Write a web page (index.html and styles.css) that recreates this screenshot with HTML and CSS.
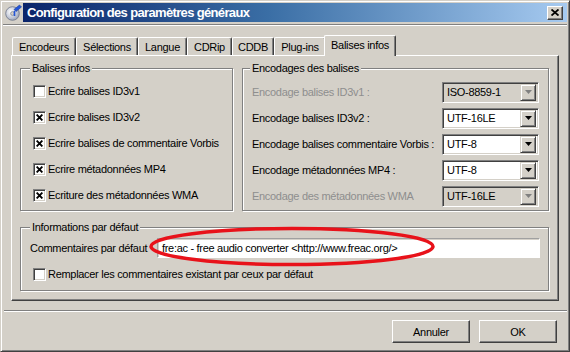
FILE: index.html
```html
<!DOCTYPE html>
<html lang="fr">
<head>
<meta charset="utf-8">
<title>Configuration des paramètres généraux</title>
<link rel="stylesheet" href="styles.css">
</head>
<body>
<div class="window">
  <div class="titlebar">
    <div class="appicon">
      <svg width="17" height="17" viewBox="0 0 17 17">
        <defs>
          <radialGradient id="cd" cx="0.38" cy="0.38" r="0.75">
            <stop offset="0" stop-color="#ffffff"/>
            <stop offset="0.55" stop-color="#c4cad8"/>
            <stop offset="1" stop-color="#8a92aa"/>
          </radialGradient>
        </defs>
        <circle cx="7.5" cy="9.5" r="6.8" fill="url(#cd)" stroke="#6c7488" stroke-width="0.8"/>
        <circle cx="7.5" cy="9.5" r="1.9" fill="#d4d0c8" stroke="#6c7488" stroke-width="0.6"/>
        <path d="M9 5.5 L14.5 1 L16.5 3 L11 7.5 Z" fill="#2456d8" stroke="#1a3c9c" stroke-width="0.6"/>
        <path d="M9.5 7 L9.5 12" stroke="#2456d8" stroke-width="1.6"/>
      </svg>
    </div>
    <div class="caption">
      <span class="caption-text">Configuration des paramètres généraux</span>
      <button class="close" type="button" aria-label="Fermer">
        <svg width="8" height="7" viewBox="0 0 8 7"><path d="M0.5 0.5 L7.5 6.5 M7.5 0.5 L0.5 6.5" stroke="#000" stroke-width="1.8"/></svg>
      </button>
    </div>
  </div>
  <div class="menusep"></div>

  <div class="client">
    <div class="tabs">
      <div class="tab tab-enc">Encodeurs</div>
      <div class="tab tab-sel">Sélections</div>
      <div class="tab tab-lang">Langue</div>
      <div class="tab tab-rip">CDRip</div>
      <div class="tab tab-cddb">CDDB</div>
      <div class="tab tab-plug">Plug-ins</div>
      <div class="tab tab-tags active">Balises infos</div>
    </div>
    <div class="panel">
      <div class="grid">
        <div class="group">
          <div class="legend legend-left">Balises infos</div>
          <div class="rows rows-left">
            <div class="check"><span class="box"></span>Ecrire balises ID3v1</div>
            <div class="check"><span class="box"><svg class="tick" width="7" height="7" viewBox="0 0 7 7"><path d="M0.6 0.6 L6.4 6.4 M6.4 0.6 L0.6 6.4" stroke="#000" stroke-width="1.9"/></svg></span>Ecrire balises ID3v2</div>
            <div class="check"><span class="box"><svg class="tick" width="7" height="7" viewBox="0 0 7 7"><path d="M0.6 0.6 L6.4 6.4 M6.4 0.6 L0.6 6.4" stroke="#000" stroke-width="1.9"/></svg></span>Ecrire balises de commentaire Vorbis</div>
            <div class="check"><span class="box"><svg class="tick" width="7" height="7" viewBox="0 0 7 7"><path d="M0.6 0.6 L6.4 6.4 M6.4 0.6 L0.6 6.4" stroke="#000" stroke-width="1.9"/></svg></span>Ecrire métadonnées MP4</div>
            <div class="check"><span class="box"><svg class="tick" width="7" height="7" viewBox="0 0 7 7"><path d="M0.6 0.6 L6.4 6.4 M6.4 0.6 L0.6 6.4" stroke="#000" stroke-width="1.9"/></svg></span>Ecriture des métadonnées WMA</div>
          </div>
        </div>

        <div class="group">
          <div class="legend legend-right">Encodages des balises</div>
          <div class="rows rows-right">
            <div class="field disabled">
              <span class="flabel">Encodage balises ID3v1 :</span>
              <div class="combo"><span class="cval">ISO-8859-1</span><span class="drop"><svg width="7" height="4" viewBox="0 0 7 4"><path d="M0 0 H7 L3.5 4 Z" fill="#808080"/></svg></span></div>
            </div>
            <div class="field">
              <span class="flabel">Encodage balises ID3v2 :</span>
              <div class="combo"><span class="cval">UTF-16LE</span><span class="drop"><svg width="7" height="4" viewBox="0 0 7 4"><path d="M0 0 H7 L3.5 4 Z" fill="#000"/></svg></span></div>
            </div>
            <div class="field">
              <span class="flabel">Encodage balises commentaire Vorbis :</span>
              <div class="combo"><span class="cval">UTF-8</span><span class="drop"><svg width="7" height="4" viewBox="0 0 7 4"><path d="M0 0 H7 L3.5 4 Z" fill="#000"/></svg></span></div>
            </div>
            <div class="field">
              <span class="flabel">Encodage métadonnées MP4 :</span>
              <div class="combo"><span class="cval">UTF-8</span><span class="drop"><svg width="7" height="4" viewBox="0 0 7 4"><path d="M0 0 H7 L3.5 4 Z" fill="#000"/></svg></span></div>
            </div>
            <div class="field disabled">
              <span class="flabel">Encodage des métadonnées WMA</span>
              <div class="combo"><span class="cval">UTF-16LE</span><span class="drop"><svg width="7" height="4" viewBox="0 0 7 4"><path d="M0 0 H7 L3.5 4 Z" fill="#808080"/></svg></span></div>
            </div>
          </div>
        </div>

        <div class="group group-wide">
          <div class="legend legend-left">Informations par défaut</div>
          <div class="rows rows-bottom">
            <div class="field field-comment">
              <span class="flabel">Commentaires par défaut</span>
              <div class="textbox">fre:ac - free audio converter &lt;http://www.freac.org/&gt;</div>
            </div>
            <div class="check"><span class="box"></span>Remplacer les commentaires existant par ceux par défaut</div>
          </div>
        </div>
      </div>
    </div>
  </div>

  <div class="hsep"></div>
  <div class="buttons">
    <button class="btn" type="button">Annuler</button>
    <button class="btn" type="button">OK</button>
  </div>

  <svg class="annotation" width="570" height="352" viewBox="0 0 570 352">
    <ellipse cx="292" cy="246.5" rx="141" ry="18" fill="none" stroke="#e8121a" stroke-width="3.5"/>
  </svg>
</div>
</body>
</html>
```

FILE: styles.css
```css
* {
  box-sizing: border-box;
}

html,
body {
  margin: 0;
  padding: 0;
}

body {
  background: #d4d0c8;
  font-family: "Liberation Sans", Arial, sans-serif;
  font-size: 11px;
  letter-spacing: -0.3px;
  color: #000;
}

.window {
  position: relative;
  width: 570px;
  height: 352px;
  background: #d4d0c8;
  border: 1px solid;
  border-color: #d4d0c8 #404040 #404040 #d4d0c8;
  box-shadow: inset 1px 1px 0 #ffffff, inset -1px -1px 0 #808080;
  padding: 2px;
  display: flex;
  flex-direction: column;
  overflow: hidden;
}

/* ---------- title bar ---------- */
.titlebar {
  display: flex;
  height: 19px;
  flex: none;
}

.appicon {
  width: 20px;
  display: flex;
  align-items: center;
  justify-content: center;
}

.caption {
  flex: 1;
  display: flex;
  align-items: center;
  padding-left: 4px;
  padding-right: 4px;
  background: linear-gradient(90deg, #0a246a 0%, #3a6ea5 45%, #a6caf0 100%);
}

.caption-text {
  color: #fff;
  font-weight: bold;
  font-size: 13px;
  letter-spacing: -0.65px;
  white-space: nowrap;
}

.close {
  margin-left: auto;
  width: 16px;
  height: 14px;
  padding: 0;
  background: #d4d0c8;
  border: 1px solid;
  border-color: #ffffff #404040 #404040 #ffffff;
  box-shadow: inset -1px -1px 0 #808080;
  display: flex;
  align-items: center;
  justify-content: center;
}

.menusep {
  flex: none;
  margin-top: 2px;
  height: 2px;
  border-top: 1px solid #808080;
  border-bottom: 1px solid #ffffff;
}

/* ---------- tabs ---------- */
.client {
  margin: 9px 8px 0 8px;
  display: flex;
  flex-direction: column;
}

.tabs {
  display: flex;
  align-items: flex-end;
  height: 21px;
  padding-left: 1px;
  margin-bottom: -1px;
  position: relative;
  z-index: 1;
}

.tab {
  height: 18px;
  margin-bottom: 1px;
  background: #d4d0c8;
  border-top: 1px solid #ffffff;
  border-left: 1px solid #ffffff;
  border-right: 1px solid #404040;
  box-shadow: inset -1px 0 0 #808080;
  border-radius: 2px 2px 0 0;
  display: flex;
  align-items: center;
  justify-content: center;
  white-space: nowrap;
  flex: none;
}

.tab-enc { width: 64px; }
.tab-sel { width: 62px; }
.tab-lang { width: 49px; }
.tab-rip { width: 45px; }
.tab-cddb { width: 42px; }
.tab-plug { width: 52px; }

.tab.active {
  width: 72px;
  height: 21px;
  margin: 0 -2px 0 -2px;
  padding-bottom: 3px;
  position: relative;
  z-index: 2;
}

.panel {
  border: 1px solid;
  border-color: #ffffff #404040 #404040 #ffffff;
  box-shadow: inset -1px -1px 0 #808080;
  padding: 12px 9px 9px 8px;
}

.grid {
  display: grid;
  grid-template-columns: 213px 307px;
  grid-template-rows: 143px 64px;
  column-gap: 9px;
  row-gap: 16px;
}

.group {
  border: 1px solid #808080;
  box-shadow: 1px 1px 0 #ffffff, inset 1px 1px 0 #ffffff;
  display: flex;
  flex-direction: column;
}

.group-wide {
  grid-column: 1 / span 2;
}

.legend {
  align-self: flex-start;
  margin-top: -7px;
  height: 13px;
  line-height: 13px;
  padding: 0 2px;
  background: #d4d0c8;
  white-space: nowrap;
}

.legend-left { margin-left: 9px; }
.legend-right { margin-left: 7px; }

.rows {
  display: flex;
  flex-direction: column;
}

.rows-left { margin-top: 3px; }
.rows-right { margin-top: 4px; }
.rows-bottom { margin-top: 1px; }

/* ---------- checkboxes ---------- */
.check {
  height: 26px;
  display: flex;
  align-items: center;
  gap: 2px;
  padding-left: 12px;
  white-space: nowrap;
}

.box {
  width: 13px;
  height: 13px;
  flex: none;
  background: #ffffff;
  border: 1px solid;
  border-color: #808080 #ffffff #ffffff #808080;
  box-shadow: inset 1px 1px 0 #404040, inset -1px -1px 0 #d4d0c8;
  display: flex;
  align-items: center;
  justify-content: center;
}

.tick {
  display: block;
}

/* ---------- combos ---------- */
.field {
  height: 26px;
  display: flex;
  align-items: center;
  padding: 0 9px 0 9px;
  white-space: nowrap;
}

.field.disabled .flabel {
  color: #8e8e8e;
}

.combo {
  margin-left: auto;
  width: 97px;
  height: 21px;
  flex: none;
  background: #ffffff;
  border: 1px solid;
  border-color: #808080 #ffffff #ffffff #808080;
  box-shadow: inset 1px 1px 0 #404040, inset -1px -1px 0 #d4d0c8;
  padding: 2px;
  display: flex;
  align-items: center;
}

.field.disabled .combo {
  background: #d4d0c8;
}

.cval {
  flex: 1;
  padding-left: 2px;
  color: #000;
}

.drop {
  width: 16px;
  height: 17px;
  flex: none;
  background: #d4d0c8;
  border: 1px solid;
  border-color: #d4d0c8 #404040 #404040 #d4d0c8;
  box-shadow: inset 1px 1px 0 #ffffff, inset -1px -1px 0 #808080;
  display: flex;
  align-items: center;
  justify-content: center;
}

.drop svg {
  display: block;
}

/* ---------- default comment ---------- */
.field-comment {
  padding: 0 8px 0 9px;
}

.textbox {
  margin-left: auto;
  width: 383px;
  height: 20px;
  flex: none;
  background: #ffffff;
  border: 1px solid;
  border-color: #a0a0a0 #ffffff #ffffff #a0a0a0;
  box-shadow: inset 1px 1px 0 #d4d0c8;
  padding-left: 4px;
  display: flex;
  align-items: center;
  white-space: nowrap;
  overflow: hidden;
}

/* ---------- bottom ---------- */
.hsep {
  flex: none;
  margin: 9px 0 0 1px;
  height: 2px;
  border-top: 1px solid #808080;
  border-bottom: 1px solid #ffffff;
}

.buttons {
  flex: none;
  display: flex;
  justify-content: flex-end;
  gap: 9px;
  margin-top: 8px;
  padding-right: 10px;
}

.btn {
  width: 78px;
  height: 23px;
  padding: 0;
  font: inherit;
  letter-spacing: inherit;
  color: #000;
  background: #d4d0c8;
  border: 1px solid;
  border-color: #ffffff #404040 #404040 #ffffff;
  box-shadow: inset -1px -1px 0 #808080;
}

/* ---------- annotation overlay ---------- */
.annotation {
  position: absolute;
  top: -1px;
  left: -1px;
  pointer-events: none;
}
```
